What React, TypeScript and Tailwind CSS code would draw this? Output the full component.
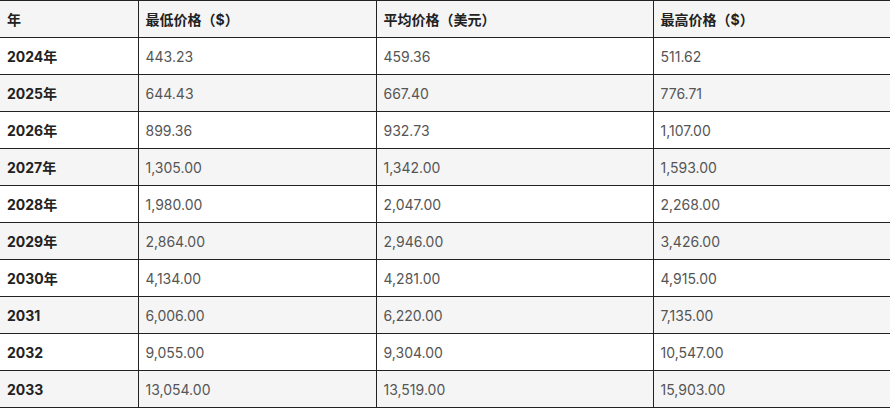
const rows = [
  ["2024年", "443.23", "459.36", "511.62"],
  ["2025年", "644.43", "667.40", "776.71"],
  ["2026年", "899.36", "932.73", "1,107.00"],
  ["2027年", "1,305.00", "1,342.00", "1,593.00"],
  ["2028年", "1,980.00", "2,047.00", "2,268.00"],
  ["2029年", "2,864.00", "2,946.00", "3,426.00"],
  ["2030年", "4,134.00", "4,281.00", "4,915.00"],
  ["2031", "6,006.00", "6,220.00", "7,135.00"],
  ["2032", "9,055.00", "9,304.00", "10,547.00"],
  ["2033", "13,054.00", "13,519.00", "15,903.00"],
];

const headers = ["年", "最低价格（$）", "平均价格（美元）", "最高价格（$）"];

export default function App() {
  return (
    <div
      className="w-[890px] h-[408px] bg-white overflow-hidden"
      style={{ fontFamily: 'Inter, "Noto Sans CJK SC", sans-serif' }}
    >
      <table className="w-[890px] border-collapse table-fixed text-[14px]">
        <colgroup>
          <col className="w-[138px]" />
          <col className="w-[238px]" />
          <col className="w-[277px]" />
          <col className="w-[237px]" />
        </colgroup>
        <thead>
          <tr className="bg-[#f5f5f5] h-[37px]">
            {headers.map((h, i) => (
              <th
                key={h}
                className={
                  "border border-[#222] text-left font-bold text-[#222] px-[7px] py-0 " +
                  (i === 0 ? "border-l-0" : "")
                }
              >
                {h}
              </th>
            ))}
          </tr>
        </thead>
        <tbody>
          {rows.map((r, ri) => (
            <tr key={r[0]} className={(ri % 2 === 1 ? "bg-[#f5f5f5]" : "bg-white") + " h-[37px]"}>
              {r.map((c, i) => (
                <td
                  key={i}
                  className={
                    "border border-[#222] px-[7px] py-0 " +
                    (i === 0 ? "border-l-0 font-bold text-[#222]" : "text-[#555]")
                  }
                >
                  {c}
                </td>
              ))}
            </tr>
          ))}
        </tbody>
      </table>
    </div>
  );
}
